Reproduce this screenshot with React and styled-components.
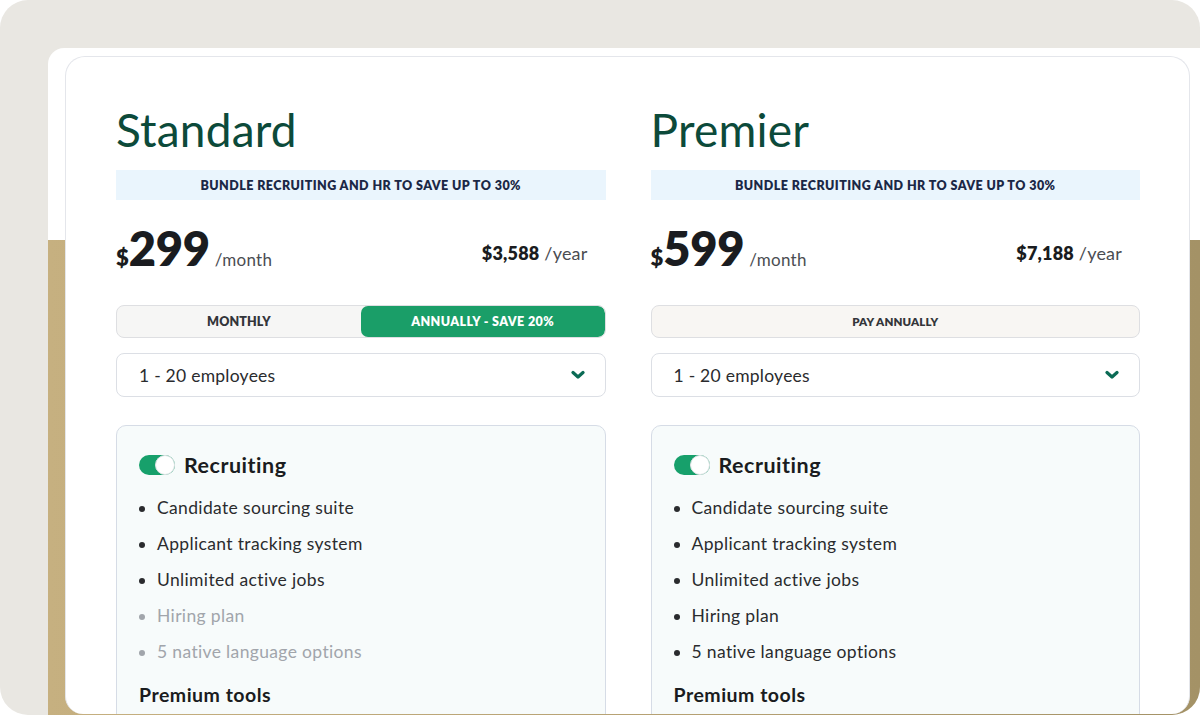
import styled, { createGlobalStyle } from "styled-components";

const GlobalStyle = createGlobalStyle`
  html, body {
    margin: 0;
    padding: 0;
    background: #ffffff;
    font-family: "Lato", "Open Sans", sans-serif;
  }
`;

const plans = [
  {
    name: "Standard",
    price: "299",
    yearly: "$3,588",
    billing: "toggle",
    features: [
      { label: "Candidate sourcing suite" },
      { label: "Applicant tracking system" },
      { label: "Unlimited active jobs" },
      { label: "Hiring plan", muted: true },
      { label: "5 native language options", muted: true },
    ],
  },
  {
    name: "Premier",
    price: "599",
    yearly: "$7,188",
    billing: "annual",
    features: [
      { label: "Candidate sourcing suite" },
      { label: "Applicant tracking system" },
      { label: "Unlimited active jobs" },
      { label: "Hiring plan" },
      { label: "5 native language options" },
    ],
  },
];

const Chevron = () => (
  <svg width="14" height="10" viewBox="0 0 14 10" aria-hidden="true">
    <polyline
      points="2,2.5 7,7 12,2.5"
      fill="none"
      stroke="currentColor"
      strokeWidth="3.2"
      strokeLinecap="round"
      strokeLinejoin="round"
    />
  </svg>
);

const App = () => {
  return (
    <>
      <GlobalStyle />
      <Frame>
        <Screen>
          <Card>
            {plans.map((plan) => (
              <Column key={plan.name}>
                <Title>{plan.name}</Title>
                <Banner>Bundle recruiting and HR to save up to 30%</Banner>
                <PriceRow>
                  <MonthPrice>
                    <Dollar>$</Dollar>
                    <Amount>{plan.price}</Amount>
                    <Per>/month</Per>
                  </MonthPrice>
                  <YearPrice>
                    <strong>{plan.yearly}</strong> /year
                  </YearPrice>
                </PriceRow>
                {plan.billing === "toggle" ? (
                  <Billing>
                    <BillingOption>Monthly</BillingOption>
                    <BillingOption $active>Annually - Save 20%</BillingOption>
                  </Billing>
                ) : (
                  <Billing $single>
                    <BillingOption $small>Pay annually</BillingOption>
                  </Billing>
                )}
                <Select>
                  <span>1 - 20 employees</span>
                  <Chevron />
                </Select>
                <Features>
                  <FeatureHead>
                    <Switch>
                      <Knob />
                    </Switch>
                    Recruiting
                  </FeatureHead>
                  <FeatureList>
                    {plan.features.map((f) => (
                      <Feature key={f.label} $muted={f.muted}>
                        {f.label}
                      </Feature>
                    ))}
                  </FeatureList>
                  <SubHead>Premium tools</SubHead>
                </Features>
              </Column>
            ))}
          </Card>
        </Screen>
      </Frame>
    </>
  );
};

const Frame = styled.div`
  width: 1200px;
  height: 715px;
  box-sizing: border-box;
  background: #e9e7e2;
  border-radius: 28px;
  overflow: hidden;
  padding: 48px 0 0 48px;
  display: flex;
`;

const Screen = styled.div`
  flex: 1;
  display: flex;
  border-radius: 16px 0 0 0;
  padding: 8px 10px 0 17px;
  background:
    linear-gradient(to bottom, #ffffff 0, #ffffff 192px, transparent 192px),
    linear-gradient(90deg, #c6b080 0%, #b7a274 50%, #a49266 100%);
`;

const Card = styled.div`
  flex: 1;
  display: grid;
  grid-template-columns: 1fr 1fr;
  column-gap: 45px;
  align-items: start;
  background: #ffffff;
  border: 1px solid #e4e6eb;
  border-bottom: none;
  border-radius: 20px 20px 18px 18px;
  padding: 0 49px 0 50px;
  overflow: hidden;
  margin-bottom: 1px;
`;

const Column = styled.div`
  display: flex;
  flex-direction: column;
`;

const Title = styled.h2`
  margin: 50px 0 0;
  font-size: 46px;
  line-height: 1;
  font-weight: 400;
  color: #0c4a3a;
  letter-spacing: 0.2px;
`;

const Banner = styled.div`
  margin-top: 17px;
  height: 30px;
  display: flex;
  align-items: center;
  justify-content: center;
  background: #eaf5fd;
  color: #1b2846;
  font-size: 12.5px;
  font-weight: 800;
  text-transform: uppercase;
  letter-spacing: 0.45px;
`;

const PriceRow = styled.div`
  margin-top: 25px;
  display: flex;
  justify-content: space-between;
  align-items: baseline;
  padding-right: 18px;
  color: #1a1c20;
`;

const MonthPrice = styled.div`
  display: flex;
  align-items: baseline;
`;

const Dollar = styled.span`
  font-size: 22px;
  font-weight: 800;
`;

const Amount = styled.span`
  font-size: 47px;
  font-weight: 800;
  line-height: 1;
  letter-spacing: -0.3px;
`;

const Per = styled.span`
  margin-left: 5px;
  font-size: 17px;
  letter-spacing: 0.3px;
  color: #4b4d52;
`;

const YearPrice = styled.div`
  font-size: 18px;
  color: #4b4d52;
  letter-spacing: 0.2px;
  position: relative;
  top: -6px;

  strong {
    color: #1a1c20;
    font-weight: 800;
  }
`;

const Billing = styled.div`
  margin-top: 33px;
  height: 33px;
  display: flex;
  box-sizing: border-box;
  border: 1px solid #dedfe2;
  border-radius: 8px;
  background: ${(p) => (p.$single ? "#f8f6f3" : "#f6f6f5")};
  overflow: hidden;
`;

const BillingOption = styled.div`
  flex: 1;
  display: flex;
  align-items: center;
  justify-content: center;
  font-size: ${(p) => (p.$small ? "11.5px" : "12.5px")};
  font-weight: 800;
  letter-spacing: ${(p) => (p.$active ? "0.4px" : "0.1px")};
  text-transform: uppercase;
  color: ${(p) => (p.$active ? "#ffffff" : "#33353a")};
  background: ${(p) => (p.$active ? "#1a9e68" : "transparent")};
  border-radius: ${(p) => (p.$active ? "7px" : "0")};
`;

const Select = styled.div`
  margin-top: 15px;
  height: 44px;
  box-sizing: border-box;
  border: 1px solid #dcdfe5;
  border-radius: 8px;
  display: flex;
  align-items: center;
  justify-content: space-between;
  padding: 0 20px 0 22px;
  font-size: 17.5px;
  letter-spacing: 0.25px;
  color: #2a2b2e;

  svg {
    color: #0b6b55;
  }
`;

const Features = styled.div`
  margin-top: 28px;
  border: 1px solid #d6dce6;
  border-radius: 10px;
  background: #f7fbfb;
  padding: 26px 22px 40px;
`;

const FeatureHead = styled.div`
  display: flex;
  align-items: center;
  gap: 9px;
  font-size: 21.5px;
  font-weight: 700;
  letter-spacing: 0.5px;
  color: #1a1c20;
`;

const Switch = styled.span`
  width: 36px;
  height: 20px;
  border-radius: 10px;
  background: #17a06b;
  position: relative;
  display: inline-block;
`;

const Knob = styled.span`
  position: absolute;
  right: 0;
  top: 0;
  width: 20px;
  height: 20px;
  box-sizing: border-box;
  border-radius: 50%;
  background: #ffffff;
  border: 1px solid #dfe3e6;
`;

const FeatureList = styled.ul`
  margin: 12px 0 0;
  padding: 0 0 0 18px;
  list-style: disc;
`;

const Feature = styled.li`
  font-size: 17.5px;
  line-height: 36px;
  letter-spacing: 0.35px;
  color: ${(p) => (p.$muted ? "#a1a5ab" : "#2a2b2e")};

  &::marker {
    color: ${(p) => (p.$muted ? "#a1a5ab" : "#2a2b2e")};
  }
`;

const SubHead = styled.div`
  margin-top: 13px;
  font-size: 19.5px;
  font-weight: 700;
  letter-spacing: 0.5px;
  color: #1a1c20;
`;

export default App;
